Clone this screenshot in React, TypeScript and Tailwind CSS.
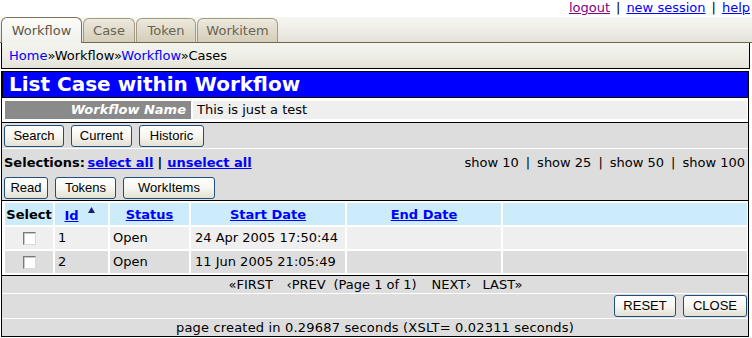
const btn =
  "flex h-[22px] items-center justify-center rounded-[3px] border border-[#1f4f7d] bg-linear-to-b from-white via-[#f7f6f1] to-[#e3e0d3] font-['Liberation_Sans',Arial,sans-serif] text-[13px] text-black";

function Button({ w, label }: { w: string; label: string }) {
  return (
    <button type="button" className={`${btn} ${w}`}>
      {label}
    </button>
  );
}

function Checkbox() {
  return (
    <span className="block h-[13px] w-[13px] border border-t-[#7a7a7a] border-l-[#7a7a7a] border-r-[#d8d8d8] border-b-[#d8d8d8] bg-white shadow-[inset_1px_1px_0_#c8c8c8]" />
  );
}

function SortArrow() {
  return (
    <svg width="7" height="6" viewBox="0 0 7 6" className="ml-[9px] -mt-[12px]">
      <path d="M3.5 0 L7 6 L0 6 Z" fill="#1c1c78" />
    </svg>
  );
}

function Sep() {
  return <span className="mx-[6px]">|</span>;
}

const rows = [
  { id: "1", status: "Open", start: "24 Apr 2005 17:50:44", bg: "bg-[#efefef]" },
  { id: "2", status: "Open", start: "11 Jun 2005 21:05:49", bg: "bg-[#dddddd]" },
];

export default function App() {
  return (
    <div className="h-[338px] w-[752px] overflow-hidden bg-white font-['DejaVu_Sans',Verdana,sans-serif] text-[13px] text-black">
      {/* top links */}
      <div className="h-[17px] pr-[2px] text-right leading-[15px]">
        <a href="#" className="text-[#800080] underline">logout</a>
        <Sep />
        <a href="#" className="text-[#0000ff] underline">new session</a>
        <Sep />
        <a href="#" className="text-[#0000ff] underline">help</a>
      </div>

      {/* tabs */}
      <div className="flex h-[26px] items-end border-b border-[#76664f] bg-linear-to-b from-[#f7f7f3] via-[#eeede6] to-[#e4e2d7] pl-px">
        <div className="relative -mb-px flex h-[26px] w-[81px] items-center justify-center rounded-t-[6px] border border-b-0 border-[#7b715d] bg-linear-to-b from-[#fbfbf8] to-[#f1f1ec] text-[#5f5848]">
          Workflow
        </div>
        <div className="ml-px flex h-[24px] w-[52px] items-center justify-center rounded-t-[6px] border border-b-0 border-[#a39b84] bg-linear-to-b from-[#ece9de] to-[#d4cdb9] text-[#6a6352]">
          Case
        </div>
        <div className="ml-px flex h-[24px] w-[60px] items-center justify-center rounded-t-[6px] border border-b-0 border-[#a39b84] bg-linear-to-b from-[#ece9de] to-[#d4cdb9] text-[#6a6352]">
          Token
        </div>
        <div className="ml-px flex h-[24px] w-[81px] items-center justify-center rounded-t-[6px] border border-b-0 border-[#a39b84] bg-linear-to-b from-[#ece9de] to-[#d4cdb9] text-[#6a6352]">
          Workitem
        </div>
      </div>

      {/* breadcrumb */}
      <div className="ml-px h-[26px] w-[749px] border-x border-b border-black bg-linear-to-b from-[#f4f4ef] via-[#eeeee7] to-[#e4e2d8] pl-[7px] leading-[25px]">
        <a href="#" className="text-[#0000ff]">Home</a>»Workflow»<a href="#" className="text-[#0000ff]">Workflow</a>»Cases
      </div>

      {/* main box */}
      <div className="mt-[2px] ml-px w-[748px] border border-black bg-white">
        <div className="h-[26px] border-b border-l border-black bg-[#0000ff] pl-[6px] text-[20px] font-bold leading-[25px] text-white">
          List Case within Workflow
        </div>

        <div className="flex gap-[2px] border-b border-black pt-[3px] pr-px pb-[3px] pl-[3px]">
          <div className="h-[18px] w-[186px] bg-[#8a8a8a] pr-[5px] text-right font-bold italic leading-[18px] text-white">
            Workflow Name
          </div>
          <div className="h-[18px] flex-1 bg-[#efefef] pl-[4px] leading-[18px]">This is just a test</div>
        </div>

        <div className="flex gap-[7px] border-b border-white bg-[#dddddd] pt-[2px] pb-px pl-[2px]">
          <Button w="w-[60px]" label="Search" />
          <Button w="w-[61px]" label="Current" />
          <Button w="w-[65px]" label="Historic" />
        </div>

        <div className="border-b border-black bg-[#dddddd]">
          <div className="flex h-[24px] items-center justify-between pt-[4px] pr-[3px] pl-[2px]">
            <div className="font-bold">
              Selections: <a href="#" className="-ml-[2px] text-[#0000ff] underline">select all</a>
              <span className="mr-[5px] ml-[4px]">|</span>
              <a href="#" className="text-[#0000ff] underline">unselect all</a>
            </div>
            <div>
              show 10<span className="mx-[7px]">|</span>show 25<span className="mx-[7px]">|</span>show 50
              <span className="mx-[7px]">|</span>show 100
            </div>
          </div>
          <div className="flex gap-[7px] pt-[4px] pb-px pl-[2px]">
            <Button w="w-[44px]" label="Read" />
            <Button w="w-[61px]" label="Tokens" />
            <Button w="w-[92px]" label="WorkItems" />
          </div>
        </div>

        {/* table */}
        <div className="grid grid-cols-[48px_53px_79px_154px_154px_1fr] gap-[2px] border-b border-black pt-[2px] pr-px pb-[2px] pl-[3px]">
          <div className="flex h-[22px] items-center justify-center bg-[#ccecfc] pt-[2px] font-bold">Select</div>
          <div className="flex h-[22px] items-center justify-center bg-[#ccecfc] pt-[4px] pr-[4px] font-bold">
            <a href="#" className="text-[#0000ff] underline">Id</a>
            <SortArrow />
          </div>
          <div className="flex h-[22px] items-center justify-center bg-[#ccecfc] pt-[2px] font-bold">
            <a href="#" className="text-[#0000ff] underline">Status</a>
          </div>
          <div className="flex h-[22px] items-center justify-center bg-[#ccecfc] pt-[2px] font-bold">
            <a href="#" className="text-[#0000ff] underline">Start Date</a>
          </div>
          <div className="flex h-[22px] items-center justify-center bg-[#ccecfc] pt-[2px] font-bold">
            <a href="#" className="text-[#0000ff] underline">End Date</a>
          </div>
          <div className="h-[22px] bg-[#ccecfc]" />

          {rows.map((r) => (
            <div key={r.id} className="contents">
              <div className={`flex h-[22px] items-center justify-center ${r.bg}`}>
                <Checkbox />
              </div>
              <div className={`flex h-[22px] items-center pl-[3px] ${r.bg}`}>{r.id}</div>
              <div className={`flex h-[22px] items-center pl-[3px] ${r.bg}`}>{r.status}</div>
              <div className={`flex h-[22px] items-center pl-[4px] ${r.bg}`}>{r.start}</div>
              <div className={`h-[22px] ${r.bg}`} />
              <div className={`h-[22px] ${r.bg}`} />
            </div>
          ))}
        </div>

        <div className="flex h-[18px] items-center justify-center border-b border-white bg-[#dddddd] pl-[2px] leading-[17px] whitespace-nowrap">
          <span className="w-[58px]">«FIRST</span>
          <span className="w-[47px]">‹PREV</span>
          <span className="w-[98px]">(Page 1 of 1)</span>
          <span className="w-[51px]">NEXT›</span>
          <span className="w-[41px]">LAST»</span>
        </div>

        <div className="flex justify-end gap-[7px] border-b border-white bg-[#dddddd] py-px pr-px">
          <Button w="w-[62px]" label="RESET" />
          <Button w="w-[64px]" label="CLOSE" />
        </div>

        <div className="h-[17px] bg-[#dddddd] text-center leading-[17px] tracking-[0.18px]">
          page created in 0.29687 seconds (XSLT= 0.02311 seconds)
        </div>
      </div>
    </div>
  );
}
